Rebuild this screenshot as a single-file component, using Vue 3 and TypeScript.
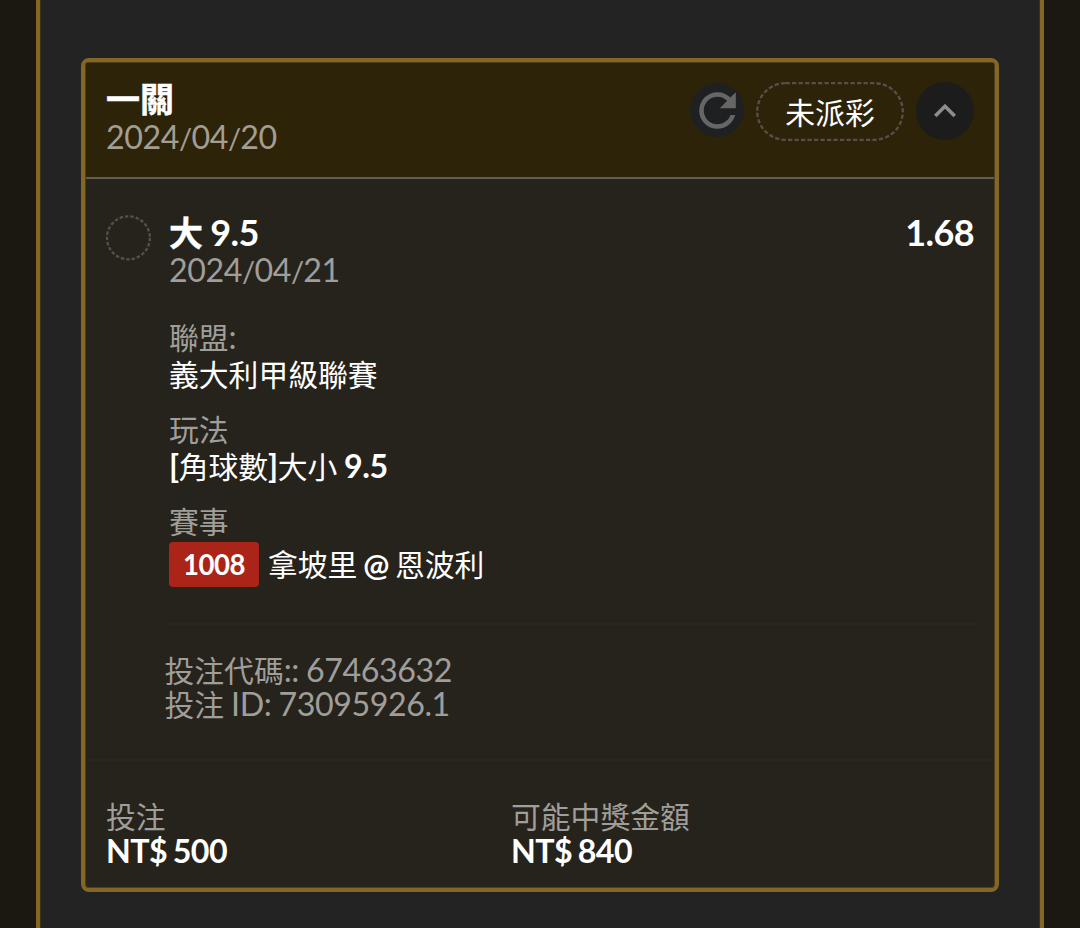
<script setup lang="ts">
interface Part {
  text: string
  kind?: 'cjk' | 'bold' | 'slash'
}
interface Field {
  label: Part[]
  value: Part[]
}

const dateParts = (date: string): Part[] =>
  date.split(/(\/)/).map((text) => (text === '/' ? { text, kind: 'slash' } : { text }))

const placed = dateParts('2024/04/20')
const kickoff = dateParts('2024/04/21')

const fields: Field[] = [
  {
    label: [{ text: '聯盟', kind: 'cjk' }, { text: ':' }],
    value: [{ text: '義大利甲級聯賽', kind: 'cjk' }],
  },
  {
    label: [{ text: '玩法', kind: 'cjk' }],
    value: [
      { text: '[', kind: 'bold' },
      { text: '角球數', kind: 'cjk' },
      { text: ']', kind: 'bold' },
      { text: '大小', kind: 'cjk' },
      { text: ' 9.5', kind: 'bold' },
    ],
  },
]

const codes: Part[][] = [
  [{ text: '投注代碼', kind: 'cjk' }, { text: ':: 67463632' }],
  [{ text: '投注', kind: 'cjk' }, { text: ' ID: 73095926.1' }],
]

const totals = [
  { label: '投注', amount: 'NT$ 500' },
  { label: '可能中獎金額', amount: 'NT$ 840' },
]
</script>

<template>
  <div class="page">
    <main class="panel">
      <article class="card">
        <header class="head">
          <div>
            <div class="line title">一關</div>
            <div class="line muted date"><span v-for="(p, j) in placed" :key="j" :class="p.kind">{{ p.text }}</span></div>
          </div>
          <div class="actions">
            <button class="refresh" aria-label="refresh">
              <svg width="55" height="55" viewBox="0 0 24 24">
                <path
                  d="M17.65 6.35C16.2 4.9 14.21 4 12 4c-4.42 0-7.99 3.58-7.99 8s3.57 8 7.99 8c3.73 0 6.84-2.55 7.73-6h-2.08c-.82 2.33-3.04 4-5.65 4-3.31 0-6-2.69-6-6s2.69-6 6-6c1.66 0 3.14.69 4.22 1.78L13 11h7V4l-2.35 2.35z"
                />
              </svg>
            </button>
            <div class="status">
              <svg class="outline" width="148" height="59" viewBox="0 0 148 59">
                <rect x="1.2" y="1.2" width="145.6" height="56.6" rx="28.3" />
              </svg>
              <span>未派彩</span>
            </div>
            <button class="toggle" aria-label="collapse">
              <svg width="44" height="44" viewBox="0 0 24 24">
                <path d="M7.41 15.41 12 10.83l4.59 4.58L18 14l-6-6-6 6z" />
              </svg>
            </button>
          </div>
        </header>

        <section class="bet">
          <svg class="ring" width="46" height="46" viewBox="0 0 46 46">
            <circle cx="22.4" cy="22.8" r="21.5" />
          </svg>
          <div class="detail">
            <div class="pick">
              <div class="line pick-name"><span class="pick-cjk">大</span> 9.5</div>
              <div class="line odds">1.68</div>
            </div>
            <div class="line muted pick-date"><span v-for="(p, j) in kickoff" :key="j" :class="p.kind">{{ p.text }}</span></div>

            <div v-for="(f, i) in fields" :key="i" class="field">
              <div class="line muted label"><span v-for="(p, j) in f.label" :key="j" :class="p.kind">{{ p.text }}</span></div>
              <div class="line value"><span v-for="(p, j) in f.value" :key="j" :class="p.kind">{{ p.text }}</span></div>
            </div>

            <div class="event">
              <div class="line muted label"><span class="cjk">賽事</span></div>
              <div class="match">
                <span class="badge">1008</span>
                <div class="line value teams"><span class="cjk">拿坡里</span><span class="bold at"> @ </span><span class="cjk">恩波利</span></div>
              </div>
            </div>

            <div class="codes">
              <div v-for="(c, i) in codes" :key="i" class="line muted"><span v-for="(p, j) in c" :key="j" :class="p.kind">{{ p.text }}</span></div>
            </div>
          </div>
        </section>

        <footer class="totals">
          <div v-for="t in totals" :key="t.label">
            <div class="line muted"><span class="cjk">{{ t.label }}</span></div>
            <div class="line amount">{{ t.amount }}</div>
          </div>
        </footer>
      </article>
    </main>
  </div>
</template>

<style>
body {
  background: #1b1811;
  overflow: hidden;
}
</style>

<style scoped>
.page {
  box-sizing: border-box;
  width: 1080px;
  height: 928px;
  padding: 0 36px;
  background: #1b1811;
  font-family: Lato, "Noto Sans CJK TC", sans-serif;
  font-size: 32.2px;
  letter-spacing: -0.42px;
  word-spacing: -0.8px;
  color: #fff;
}
.panel {
  box-sizing: border-box;
  height: 928px;
  border: solid #846725;
  border-width: 0 4px;
  padding: 58px 41px 0;
  background: #232323;
  box-shadow: inset 1px 0 #3c331f, inset -1px 0 #3c331f;
}
.card {
  box-sizing: border-box;
  width: 918px;
  height: 834px;
  border: 4px solid #846725;
  border-radius: 8px;
  background: #26231c;
  box-shadow: inset 0 0 0 1px #4f3f1c;
  display: flex;
  flex-direction: column;
}
.line {
  height: 34px;
  line-height: 34px;
  white-space: pre;
}
.cjk {
  font-size: 29.8px;
  line-height: 0;
  letter-spacing: 0;
}
.bold {
  font-weight: 700;
}
.slash {
  font-size: 29px;
  line-height: 0;
  letter-spacing: -0.7px;
}
.muted {
  color: #a09e9a;
}
.head {
  box-sizing: border-box;
  height: 117px;
  margin: 0 1px;
  padding: 20px 20px 0;
  display: flex;
  justify-content: space-between;
  background: linear-gradient(#2d2308, #2d2308) 0 1px no-repeat;
  border-bottom: 2px solid #625e54;
}
.title {
  font-size: 34px;
  font-weight: 700;
  height: 38px;
  letter-spacing: 0;
  -webkit-text-stroke: 0.5px #fff;
}
.head .date {
  color: #a39e93;
}
.actions {
  display: flex;
  align-items: flex-start;
}
button {
  border: 0;
  padding: 0;
  border-radius: 50%;
  display: flex;
  align-items: center;
  justify-content: center;
}
.refresh {
  width: 54px;
  height: 54px;
  margin-top: 1px;
  background: #1f2022;
}
.refresh svg {
  flex: none;
  fill: #666;
}
.status {
  position: relative;
  width: 148px;
  height: 59px;
  margin: 0 12px;
  font-size: 29.8px;
  letter-spacing: 0;
  line-height: 61px;
  text-align: center;
}
.outline {
  position: absolute;
  left: 0;
  top: 0;
  fill: none;
  stroke: #55504a;
  stroke-width: 2.3;
  stroke-dasharray: 4.3 2.2;
}
.toggle {
  width: 58px;
  height: 58px;
  background: #1c1c1d;
}
.toggle svg {
  fill: #8d8d8d;
}
.bet {
  display: flex;
  margin: 0 1px;
  padding: 36px 20px 0;
  height: 582px;
  box-sizing: border-box;
  border-bottom: 2px solid #2a2720;
}
.ring {
  flex: none;
  fill: none;
  stroke: #54514b;
  stroke-width: 2.3;
  stroke-dasharray: 3.4 2;
}
.detail {
  flex: 1;
  padding-left: 17px;
}
.pick {
  display: flex;
  justify-content: space-between;
  font-weight: 700;
  font-size: 36px;
  letter-spacing: -0.6px;
  word-spacing: -1px;
  height: 38px;
}
.pick .line {
  line-height: 34px;
}
.pick-cjk {
  font-size: 34px;
  line-height: 0;
  letter-spacing: 0;
  -webkit-text-stroke: 0.4px #fff;
}
.pick-date {
  margin-bottom: 33px;
}
.field {
  margin-bottom: 21px;
}
.label {
  height: 37px;
}
.match {
  display: flex;
  align-items: center;
  gap: 9px;
}
.at {
  font-size: 31px;
  word-spacing: -1.2px;
}
.badge {
  width: 90px;
  height: 45px;
  margin: 1px 0 -1px;
  border-radius: 4px;
  background: #aa2419;
  font-size: 27.6px;
  letter-spacing: -0.5px;
  font-weight: 700;
  line-height: 46px;
  text-align: center;
}
.codes {
  margin-left: -4.5px;
  padding-top: 28px;
}
.event {
  padding-bottom: 37px;
  border-bottom: 2px solid #2a2720;
}
.totals {
  display: grid;
  grid-template-columns: 405px 1fr;
  padding: 38px 21px 0;
}
.amount {
  font-weight: 700;
  letter-spacing: -0.6px;
  word-spacing: -1.4px;
  line-height: 35px;
}
</style>
